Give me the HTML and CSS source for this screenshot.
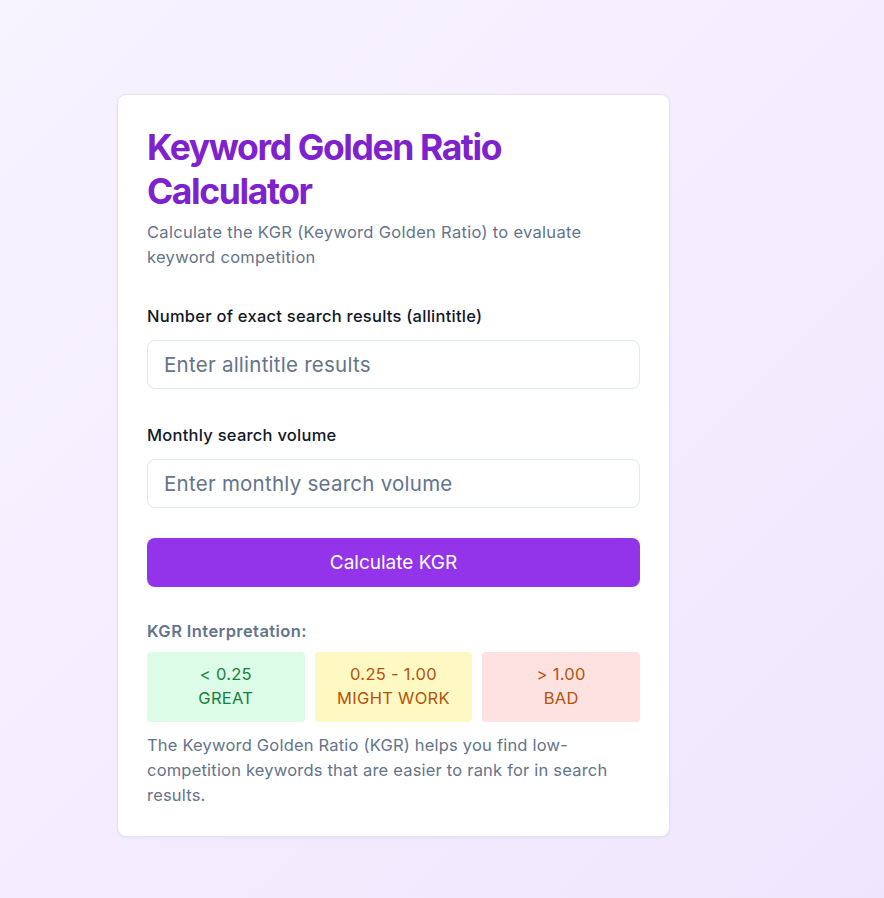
FILE: index.html
```html
<!DOCTYPE html>
<html lang="en">
<head>
    <meta charset="UTF-8">
    <meta name="viewport" content="width=device-width, initial-scale=1.0">
    <title>Keyword Golden Ratio Calculator</title>
    <link rel="stylesheet" href="styles.css">
</head>
<body>

    <div class="page">
        <div class="card">
            <h1>Keyword Golden Ratio Calculator</h1>
            <p class="subtitle">Calculate the KGR (Keyword Golden Ratio) to evaluate keyword competition</p>

            <div class="field">
                <label for="allintitle">Number of exact search results (allintitle)</label>
                <input type="number" id="allintitle" placeholder="Enter allintitle results">
            </div>

            <div class="field">
                <label for="volume">Monthly search volume</label>
                <input type="number" id="volume" placeholder="Enter monthly search volume">
            </div>

            <button class="calc-btn">Calculate KGR</button>

            <h3 class="legend-title">KGR Interpretation:</h3>
            <div class="legend">
                <div class="legend-item great">&lt; 0.25<br>GREAT</div>
                <div class="legend-item maybe">0.25 - 1.00<br>MIGHT WORK</div>
                <div class="legend-item bad">&gt; 1.00<br>BAD</div>
            </div>

            <p class="note">The Keyword Golden Ratio (KGR) helps you find low-competition keywords that are easier to rank for in search results.</p>
        </div>
    </div>

</body>
</html>
```

FILE: styles.css
```css
* {
    box-sizing: border-box;
}

html, body {
    margin: 0;
    padding: 0;
}

body {
    font-family: 'Inter', 'Noto Sans', sans-serif;
    background: linear-gradient(135deg, #f7f3ff 0%, #f3ecfe 60%, #efe6fd 100%);
    min-height: 898px;
}

.page {
    padding: 94px 0 40px 117px;
}

.card {
    width: 553px;
    background-color: white;
    border: 1px solid #e4e2f0;
    border-radius: 9px;
    box-shadow: 0 1px 3px rgba(60, 40, 120, 0.06);
    padding: 30px 29px 28px;
}

h1 {
    margin: 0;
    padding-top: 1px;
    color: #7e22ce;
    font-size: 35.5px;
    line-height: 44px;
    font-weight: 700;
    letter-spacing: -1.4px;
}

.subtitle {
    margin: 6px 0 0;
    color: #64748b;
    font-size: 16.5px;
    line-height: 25px;
    letter-spacing: 0.3px;
}

.field {
    margin-top: 35px;
}

.field + .field {
    margin-top: 35px;
}

label {
    display: block;
    color: #111827;
    font-size: 16.5px;
    font-weight: 500;
    line-height: 22px;
    letter-spacing: 0.25px;
    margin-bottom: 13px;
}

input {
    display: block;
    width: 100%;
    height: 49px;
    padding: 0 16px;
    border: 1px solid #e2e8f0;
    border-radius: 8px;
    font-family: inherit;
    font-size: 20.5px;
    letter-spacing: 0.25px;
    color: #1f2937;
    outline: none;
}

input::placeholder {
    color: #64748b;
}

.calc-btn {
    display: block;
    width: 100%;
    height: 49px;
    margin-top: 30px;
    border: none;
    border-radius: 8px;
    background-color: #9333ea;
    color: white;
    font-family: inherit;
    font-size: 19px;
    cursor: pointer;
}

.calc-btn:hover {
    background-color: #7e22ce;
}

.legend-title {
    margin: 33px 0 10px;
    color: #64748b;
    font-size: 16.5px;
    line-height: 22px;
    font-weight: 600;
    letter-spacing: 0.4px;
}

.legend {
    display: grid;
    grid-template-columns: repeat(3, 1fr);
    gap: 10px;
}

.legend-item {
    padding: 10px 4px 12px;
    border-radius: 4px;
    text-align: center;
    font-size: 16.5px;
    line-height: 24px;
    letter-spacing: 0.3px;
}

.great {
    background-color: #dcfce7;
    color: #15803d;
}

.maybe {
    background-color: #fef9c3;
    color: #b45309;
}

.bad {
    background-color: #fee2e2;
    color: #b45309;
}

.note {
    margin: 11px 0 0;
    color: #64748b;
    font-size: 16.5px;
    line-height: 25px;
    letter-spacing: 0.2px;
}
```
